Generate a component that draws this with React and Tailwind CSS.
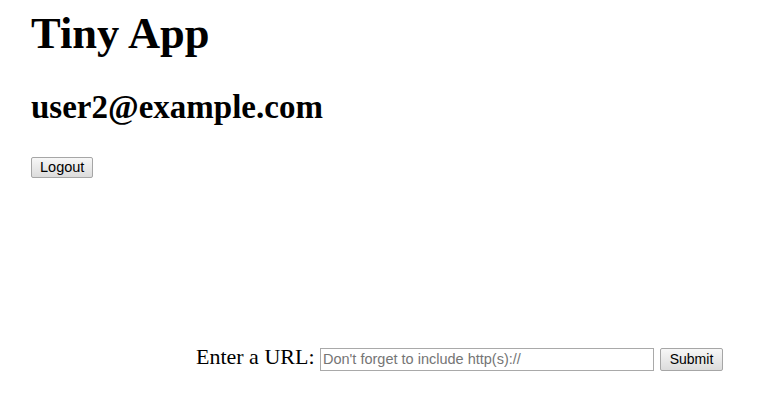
export default function App() {
  return (
    <div className="min-h-[406px] bg-white text-black font-['Liberation_Serif',serif]">
      <div className="pl-[31px] flex flex-col items-start">
        <h1 className="mt-[11px] text-[44.5px] leading-none font-bold">Tiny App</h1>
        <h2 className="mt-[35px] text-[33px] leading-none font-bold">user2@example.com</h2>
        <button className="mt-[33px] h-[21px] px-[8px] border border-[#a6a6a6] rounded-[2px] bg-gradient-to-b from-[#f7f7f7] to-[#dcdcdc] text-[14.5px] leading-none text-black font-['Liberation_Sans',sans-serif]">
          Logout
        </button>
      </div>
      <form className="mt-[170px] flex items-start justify-end pr-[44px]">
        <label className="mt-[-2px] text-[22px] leading-none whitespace-pre">Enter a URL: </label>
        <input
          type="text"
          placeholder="Don't forget to include http(s)://"
          className="w-[334px] h-[23px] px-[2px] border border-[#a9a9a9] bg-white text-[14.5px] font-['Liberation_Sans',sans-serif] placeholder:text-[#757575] outline-none"
        />
        <button
          type="button"
          className="ml-[6px] h-[23px] w-[63px] border border-[#a6a6a6] rounded-[2px] bg-gradient-to-b from-[#f7f7f7] to-[#dcdcdc] text-[14px] leading-none text-black font-['Liberation_Sans',sans-serif]"
        >
          Submit
        </button>
      </form>
    </div>
  );
}
